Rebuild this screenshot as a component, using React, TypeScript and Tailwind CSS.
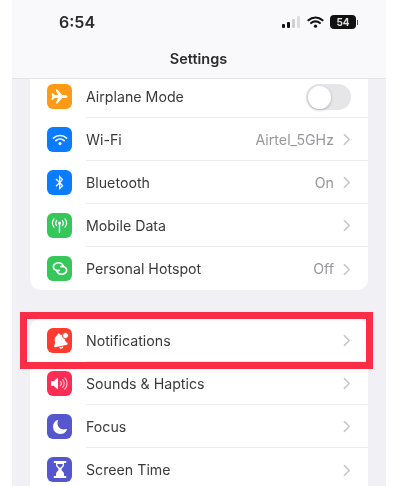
import type { ReactNode } from "react";
import { FaBell, FaBluetoothB } from "react-icons/fa";
import { IoAirplane, IoMoon } from "react-icons/io5";

const font = { fontFamily: "Inter, 'Liberation Sans', sans-serif" };

function Chevron() {
  return (
    <svg width="8" height="13" viewBox="0 0 8 13" fill="none" className="ml-[9px] shrink-0">
      <path d="M1.4 1.6 6.200 6.500 1.400 11.400" stroke="#c8c8cc" strokeWidth="1.6" strokeLinecap="round" strokeLinejoin="round" />
    </svg>
  );
}

function Row({ icon, color, label, value, last, toggle, short }: { icon: ReactNode; color: string; label: string; value?: string; last?: boolean; toggle?: boolean; short?: boolean }) {
  return (
    <div className={`flex pl-[17px] ${short ? "h-[39px]" : "h-[43px]"}`}>
      <div className={`flex w-[39px] shrink-0 ${short ? "items-start pt-[5px]" : "items-center"}`}>
        <div className={`grid h-[25px] w-[25px] place-items-center rounded-[6px] text-white ${color}`}>{icon}</div>
      </div>
      <div className={`flex min-w-0 flex-1 items-center pr-[17px] ${short ? "pb-[2px]" : "pt-[1px]"} ${last ? "" : "border-b border-[#ececef]"}`}>
        <span className="flex-1 text-[14.2px] text-[#3a3a3c]">{label}</span>
        {value && <span className="text-[14.2px] text-[#98989c]">{value}</span>}
        {toggle ? (
          <div className="flex h-[26px] w-[45px] items-center rounded-full bg-[#e6e6e8] p-[1.5px]">
            <div className="h-[23px] w-[23px] rounded-full bg-white shadow-[0_1px_3px_rgba(0,0,0,0.25)]" />
          </div>
        ) : (
          <Chevron />
        )}
      </div>
    </div>
  );
}

function SignalBars() {
  return (
    <div className="flex items-end gap-[2px]">
      <div className="h-[4px] w-[3px] rounded-[1px] bg-[#111]" />
      <div className="h-[6px] w-[3px] rounded-[1px] bg-[#111]" />
      <div className="h-[9px] w-[3px] rounded-[1px] bg-[#cfcfd2]" />
      <div className="h-[12px] w-[3px] rounded-[1px] bg-[#dcdcde]" />
    </div>
  );
}

function WifiArcs({ size, stroke }: { size: number; stroke: number }) {
  return (
    <svg width={size} height={size * 0.72} viewBox="0 0 18 13" fill="none" stroke="currentColor" strokeWidth={stroke} strokeLinecap="round">
      <path d="M1.500 4.600a11 11 0 0 1 15 0" />
      <path d="M4.300 7.500a7 7 0 0 1 9.400 0" />
      <circle cx="9" cy="10.800" r="1.700" fill="currentColor" stroke="none" />
    </svg>
  );
}

function Antenna() {
  return (
    <svg width="19" height="17" viewBox="0 0 19 17" fill="none" stroke="white" strokeWidth="1.2" strokeLinecap="round">
      <circle cx="9.5" cy="6" r="1.5" fill="white" stroke="none" />
      <path d="M9.5 7v8.5" strokeWidth="1.4" />
      <path d="M6.6 3.5a4 4 0 0 0 0 5M12.4 3.5a4 4 0 0 1 0 5" />
      <path d="M4 1.8a7 7 0 0 0 0 8.4M15 1.8a7 7 0 0 1 0 8.4" />
    </svg>
  );
}

function Hotspot() {
  return (
    <svg width="18" height="17" viewBox="0 0 18 17" fill="none" stroke="white" strokeWidth="1.6" strokeLinecap="round">
      <path d="M8.200 10.400c-2.600.6-5.400-.4-5.800-3C2 4.800 4.400 2.800 7.200 2.800c2.400 0 4.300 1.100 4.900 3" />
      <path d="M9.800 6.600c2.600-.6 5.400.4 5.800 3 .4 2.600-2 4.600-4.800 4.600-2.400 0-4.300-1.100-4.900-3" />
    </svg>
  );
}

function Speaker() {
  return (
    <svg width="19" height="15" viewBox="0 0 19 15" fill="none">
      <path d="M1 5.2h2.6L8 1.6v11.8L3.6 9.8H1z" fill="white" />
      <path d="M10.4 5.4a3 3 0 0 1 0 4.2M12.6 3.6a5.6 5.6 0 0 1 0 7.8M14.8 1.9a8 8 0 0 1 0 11.2" stroke="#ffc4d0" strokeWidth="1.2" strokeLinecap="round" />
    </svg>
  );
}

function Hourglass() {
  return (
    <svg width="14" height="17" viewBox="0 0 14 17" fill="none">
      <path d="M1.5 1h11M1.5 16h11" stroke="white" strokeWidth="1.8" strokeLinecap="round" />
      <path d="M3 2v2.2c0 1.7 2.6 3 2.6 4.3S3 11.100 3 12.800V15h8v-2.200c0-1.700-2.600-3-2.600-4.300S11 5.900 11 4.200V2z" fill="white" />
      <path d="M4.300 3h5.400v1c0 .9-1.700 2-2.700 3-1-1-2.700-2.100-2.700-3z" fill="#5657c8" />
    </svg>
  );
}

function BellDot() {
  return (
    <div className="relative grid h-[18px] w-[18px] place-items-center">
      <FaBell className="-rotate-[12deg] text-[16px]" />
      <span className="absolute right-0 top-0 h-[7px] w-[7px] rounded-full border border-[#ff3b30] bg-white" />
    </div>
  );
}

export default function App() {
  return (
    <div style={font} className="h-[486px] w-[418px] overflow-hidden bg-white blur-[0.4px]">
      <div className="relative ml-3 h-full w-[374px] bg-[#f0f0f5]">
        <header className="h-[79px] border-b border-[#e4e4e8] bg-[#f9f9fb]">
          <div className="flex h-[44px] items-center pl-[47px] pr-[28px]">
            <span className="flex-1 text-[16px] font-semibold text-[#2c2c2e]">6:54</span>
            <SignalBars />
            <span className="ml-[7px] text-[#111]">
              <WifiArcs size={17} stroke={2.2} />
            </span>
            <div className="ml-[6px] flex items-center">
              <span className="flex h-[14px] w-[26px] items-center justify-center rounded-[4px] bg-[#111] text-[10px] font-bold text-[#e5e5e5]">54</span>
              <span className="ml-[1px] h-[5px] w-[1px] bg-[#555]" />
            </div>
          </div>
          <h1 className="mt-[4px] pr-[1px] text-center text-[14.5px] font-semibold text-[#2c2c2e]">Settings</h1>
        </header>

        <div className="flex flex-col gap-[29px] pl-[18px] pr-[18px]">
          <section className="rounded-b-[10px] bg-white">
            <Row short color="bg-[#ff9a17]" label="Airplane Mode" toggle icon={<IoAirplane className="text-[17px]" />} />
            <Row color="bg-[#0a7cff]" label="Wi-Fi" value="Airtel_5GHz" icon={<WifiArcs size={16} stroke={1.8} />} />
            <Row color="bg-[#0a7cff]" label="Bluetooth" value="On" icon={<FaBluetoothB className="text-[15px]" />} />
            <Row color="bg-[#36c75a]" label="Mobile Data" icon={<Antenna />} />
            <Row last color="bg-[#36c75a]" label="Personal Hotspot" value="Off" icon={<Hotspot />} />
          </section>

          <section className="rounded-t-[10px] bg-white">
            <Row color="bg-[#ff3b30]" label="Notifications" icon={<BellDot />} />
            <Row color="bg-[#ff2d55]" label="Sounds & Haptics" icon={<Speaker />} />
            <Row color="bg-[#5656cf]" label="Focus" icon={<IoMoon className="text-[16px]" />} />
            <Row last color="bg-[#5656cf]" label="Screen Time" icon={<Hourglass />} />
          </section>
        </div>

        {/* highlight drawn over the Notifications row */}
        <div className="absolute left-[8px] top-[312px] h-[57px] w-[353px] border-[7px] border-[#fb2d47]" />
      </div>
    </div>
  );
}
